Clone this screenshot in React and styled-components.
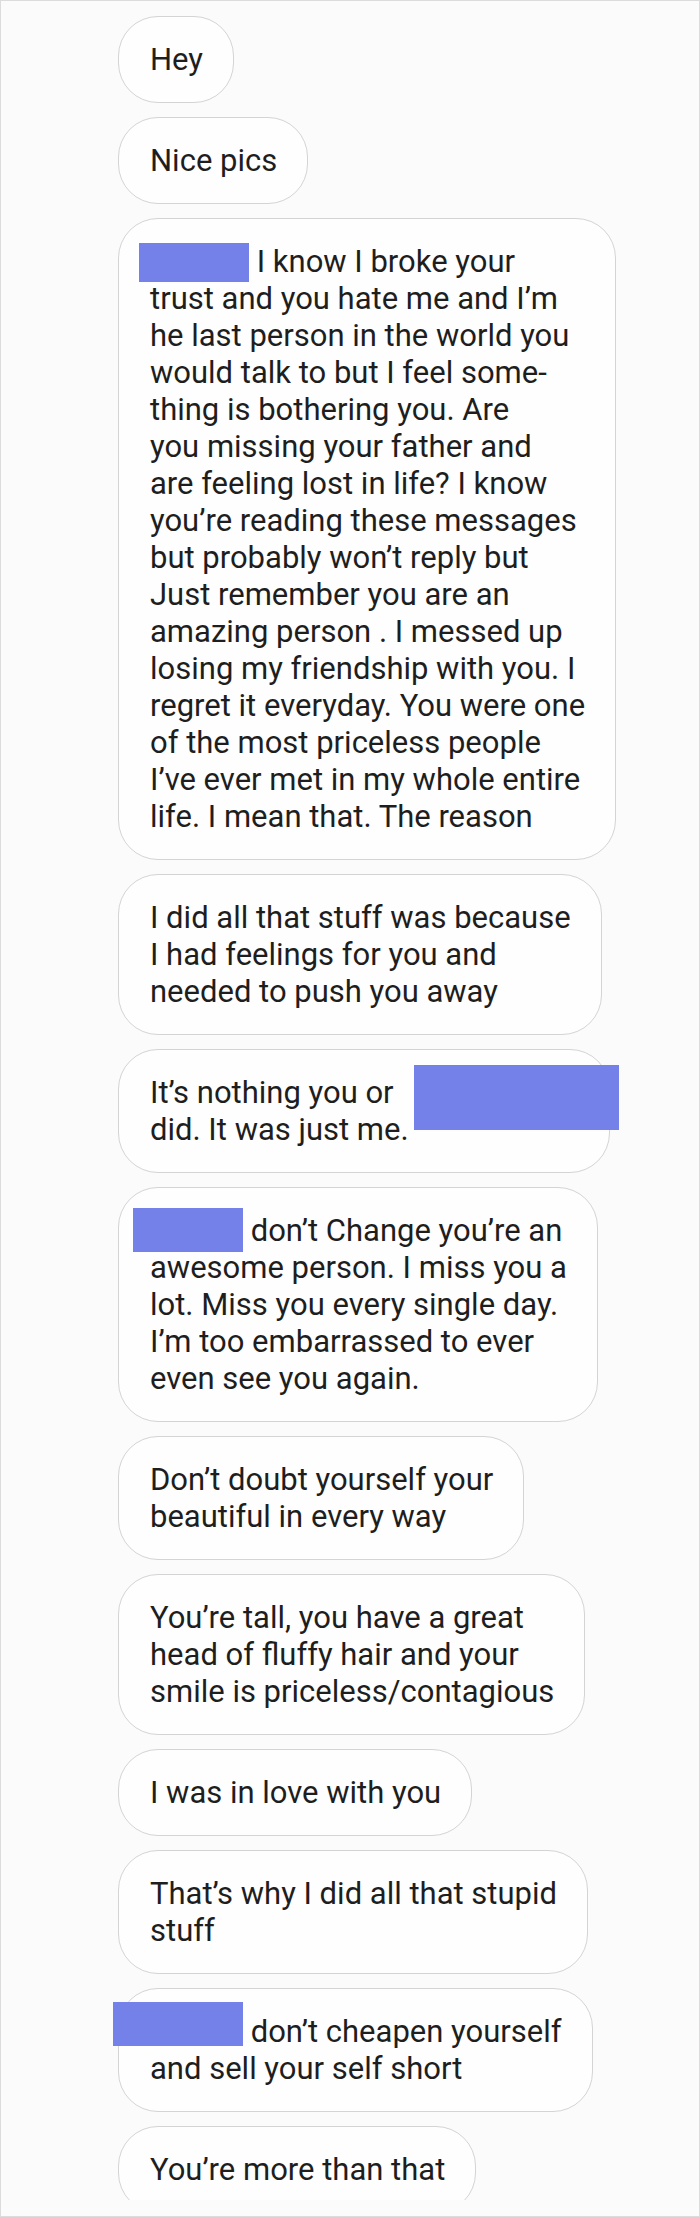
import React from 'react'
import styled, { createGlobalStyle } from 'styled-components'

const GlobalStyle = createGlobalStyle`
  html, body {
    margin: 0;
    padding: 0;
    background: #fafafa;
  }
`

const Screen = styled.div`
  box-sizing: border-box;
  width: 700px;
  height: 2217px;
  border: 1px solid #dcdcdc;
  background: #fbfbfb;
  overflow: hidden;
`

const Thread = styled.div`
  box-sizing: border-box;
  height: 2199px;
  padding: 15px 0 0 117px;
  display: flex;
  flex-direction: column;
  align-items: flex-start;
  gap: 14px;
  overflow: hidden;
`

const Bubble = styled.div`
  position: relative;
  box-sizing: border-box;
  width: ${p => (p.$width ? `${p.$width}px` : 'auto')};
  padding: 24px 30px 24px 31px;
  border: 1px solid #d4d4d4;
  border-radius: 40px;
  background: #fefefe;
  font-family: Roboto, 'Liberation Sans', sans-serif;
  font-size: 31px;
  line-height: 37px;
  color: #1e1e1e;
  white-space: nowrap;
`

const Line = styled.span`
  display: block;
`

const Redact = styled.span`
  display: inline-block;
  vertical-align: top;
  width: ${p => p.$w}px;
  height: ${p => p.$h}px;
  margin-left: ${p => -p.$shift}px;
  margin-top: ${p => -p.$rise}px;
  margin-bottom: ${p => 37 + p.$rise - p.$h}px;
  background: #7381e9;
`

const RedactOver = styled.span`
  position: absolute;
  left: ${p => p.$x}px;
  top: ${p => p.$y}px;
  width: ${p => p.$w}px;
  height: ${p => p.$h}px;
  background: #7381e9;
`

const messages = [
  { lines: ['Hey'] },
  { lines: ['Nice pics'] },
  {
    redact: { w: 110, h: 39, shift: 11, rise: 0 },
    lines: [
      'I know I broke your',
      'trust and you hate me and I’m',
      'he last person in the world you',
      'would talk to but I feel some-',
      'thing is bothering you. Are',
      'you missing your father and',
      'are feeling lost in life? I know',
      'you’re reading these messages',
      'but probably won’t reply but',
      'Just remember you are an',
      'amazing person . I messed up',
      'losing my friendship with you. I',
      'regret it everyday. You were one',
      'of the most priceless people',
      'I’ve ever met in my whole entire',
      'life. I mean that. The reason',
    ],
  },
  {
    lines: [
      'I did all that stuff was because',
      'I had feelings for you and',
      'needed to push you away',
    ],
  },
  {
    width: 492,
    over: { x: 295, y: 15, w: 205, h: 65 },
    lines: ['It’s nothing you or', 'did. It was just me.'],
  },
  {
    redact: { w: 110, h: 44, shift: 17, rise: 4 },
    lines: [
      'don’t Change you’re an',
      'awesome person. I miss you a',
      'lot. Miss you every single day.',
      'I’m too embarrassed to ever',
      'even see you again.',
    ],
  },
  { lines: ['Don’t doubt yourself your', 'beautiful in every way'] },
  {
    lines: [
      'You’re tall, you have a great',
      'head of fluffy hair and your',
      'smile is priceless/contagious',
    ],
  },
  { lines: ['I was in love with you'] },
  { lines: ['That’s why I did all that stupid', 'stuff'] },
  {
    redact: { w: 130, h: 44, shift: 37, rise: 11 },
    lines: ['don’t cheapen yourself', 'and sell your self short'],
  },
  { lines: ['You’re more than that'] },
]

function Message({ lines, redact, over, width }) {
  return (
    <Bubble $width={width}>
      {lines.map((text, i) => (
        <Line key={i}>
          {i === 0 && redact && (
            <>
              <Redact $w={redact.w} $h={redact.h} $shift={redact.shift} $rise={redact.rise} />{' '}
            </>
          )}
          {text}
        </Line>
      ))}
      {over && <RedactOver $x={over.x} $y={over.y} $w={over.w} $h={over.h} />}
    </Bubble>
  )
}

export default function App() {
  return (
    <>
      <GlobalStyle />
      <Screen>
        <Thread>
          {messages.map((m, i) => (
            <Message key={i} {...m} />
          ))}
        </Thread>
      </Screen>
    </>
  )
}
